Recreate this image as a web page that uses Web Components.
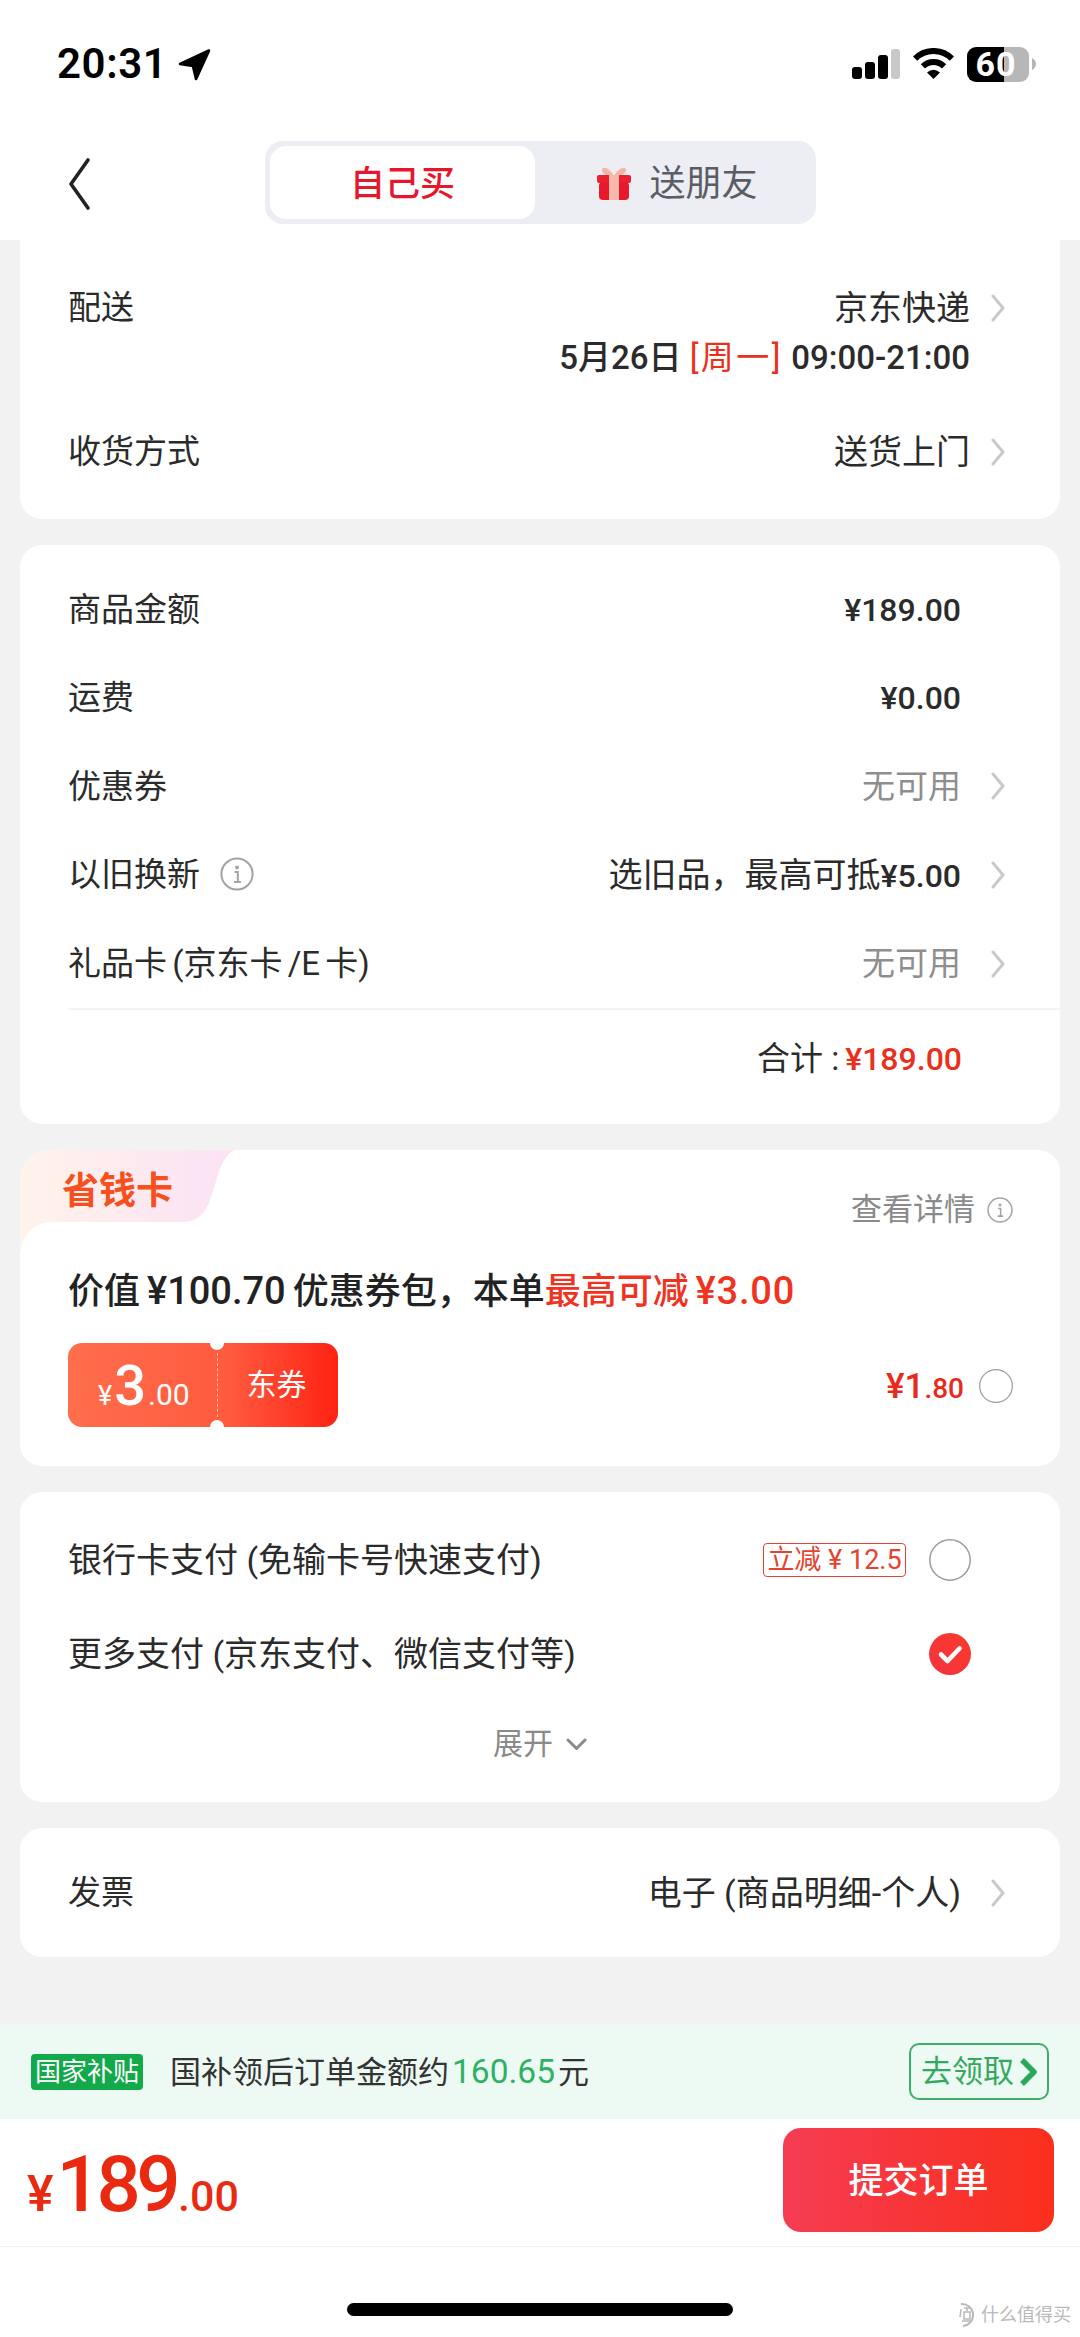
<!DOCTYPE html>
<html lang="zh-CN">
<head>
<meta charset="utf-8">
<title>确认订单</title>
<style>
    html, body { margin: 0; padding: 0; }
    body {
        width: 1080px;
        height: 2337px;
        overflow: hidden;
        display: flex;
        flex-direction: column;
        background: #f2f2f2;
        color: #2b2b2b;
        font: 400 33px/1.2 Roboto, "Noto Sans CJK SC", sans-serif;
    }
    .money { font-size: 32px; font-weight: 500; }
    .red { color: #e9301c; }
    .muted { color: #8e8e8e; }
    .date { font-size: 33px; font-weight: 500; }
    .date .red { font-weight: 400; letter-spacing: 2.5px; }
    .wide { font-size: 34px; }
    .tight { word-spacing: -3px; }
    .cards { display: flex; flex-direction: column; gap: 26px; padding: 0 20px; }
</style>
</head>
<body>
    <status-bar></status-bar>
    <nav-tabs></nav-tabs>

    <div class="cards">
        <order-card flat style="height:279px;padding-top:43px">
            <info-row style="--row-height:50px;--value-gap:21px">
                <span slot="label">配送</span>
                <span class="wide">京东快递</span>
            </info-row>
            <info-row plain style="--row-height:50px;--value-gap:21px">
                <span class="date">5月26日 <span class="red">[周一]</span> 09:00-21:00</span>
            </info-row>
            <info-row style="--row-height:50px;--value-gap:21px;margin-top:44px">
                <span slot="label">收货方式</span>
                <span class="wide">送货上门</span>
            </info-row>
        </order-card>

        <order-card style="height:579px;padding-top:20px">
            <info-row plain>
                <span slot="label">商品金额</span>
                <span class="money">¥189.00</span>
            </info-row>
            <info-row plain>
                <span slot="label">运费</span>
                <span class="money">¥0.00</span>
            </info-row>
            <info-row>
                <span slot="label">优惠券</span>
                <span class="muted">无可用</span>
            </info-row>
            <info-row>
                <span slot="label">以旧换新<info-icon></info-icon></span>
                <span class="wide">选旧品，最高可抵</span><span class="money">¥5.00</span>
            </info-row>
            <info-row>
                <span slot="label" class="tight">礼品卡 (京东卡 /E 卡)</span>
                <span class="muted">无可用</span>
            </info-row>
            <order-total>合计 : <span slot="amount">¥189.00</span></order-total>
        </order-card>

        <saving-card></saving-card>

        <order-card style="height:310px;padding-top:21px">
            <pay-option>
                银行卡支付 (免输卡号快速支付)
                <promo-tag slot="tag">立减 ¥ 12.5</promo-tag>
            </pay-option>
            <pay-option checked>更多支付 (京东支付、微信支付等)</pay-option>
            <expand-row>展开</expand-row>
        </order-card>

        <order-card style="height:129px;padding-top:2px">
            <info-row style="--row-height:126px">
                <span slot="label">发票</span>
                <span class="wide">电子 (商品明细-个人)</span>
            </info-row>
        </order-card>
    </div>

    <page-footer>
        <subsidy-bar></subsidy-bar>
        <checkout-bar></checkout-bar>
    </page-footer>

<script>
class ChevronIcon extends HTMLElement {
    connectedCallback() {
        this.attachShadow({mode: "open"}).innerHTML = `
            <style>
                :host { display: block; width: 14px; height: 28px; }
                svg { display: block; }
            </style>
            <svg width="14" height="28" viewBox="0 0 14 28" fill="none">
                <path d="M2 2 L12 14 L2 26" stroke="#c9c9c9" stroke-width="3" stroke-linecap="round" stroke-linejoin="round"/>
            </svg>`;
    }
}

class InfoIcon extends HTMLElement {
    connectedCallback() {
        this.attachShadow({mode: "open"}).innerHTML = `
            <style>
                :host {
                    display: inline-block;
                    width: var(--icon-size, 34px);
                    height: var(--icon-size, 34px);
                    margin-left: var(--icon-gap, 20px);
                    vertical-align: -5px;
                }
                svg { display: block; width: 100%; height: 100%; }
            </style>
            <svg viewBox="0 0 34 34" fill="none">
                <circle cx="17" cy="17" r="15.6" stroke="#a3a3a3" stroke-width="2"/>
                <circle cx="17" cy="10.5" r="1.9" fill="#a3a3a3"/>
                <path d="M14.5 15 H17.8 V24.5 M14 25 H21" stroke="#a3a3a3" stroke-width="2"/>
            </svg>`;
    }
}

class RadioMark extends HTMLElement {
    connectedCallback() {
        const checked = this.hasAttribute("checked");
        this.attachShadow({mode: "open"}).innerHTML = `
            <style>
                :host {
                    display: block;
                    width: var(--radio-size, 42px);
                    height: var(--radio-size, 42px);
                }
                svg { display: block; width: 100%; height: 100%; }
            </style>
            <svg viewBox="0 0 42 42" fill="none">
                ${checked ? `
                <defs><linearGradient id="g" x1="0" y1="1" x2="1" y2="0">
                    <stop offset="0" stop-color="#f4333f"/><stop offset="1" stop-color="#fb3a2c"/>
                </linearGradient></defs>
                <circle cx="21" cy="21" r="21" fill="url(#g)"/>
                <path d="M12 21.5 L18.5 28 L30.5 15.5" stroke="#fff" stroke-width="4.6" stroke-linecap="round" stroke-linejoin="round"/>
                ` : `<circle cx="21" cy="21" r="20.2" stroke="#9c9c9c" stroke-width="1.5"/>`}
            </svg>`;
    }
}

class StatusBar extends HTMLElement {
    connectedCallback() {
        this.attachShadow({mode: "open"}).innerHTML = `
            <style>
                :host {
                    display: flex;
                    align-items: center;
                    justify-content: space-between;
                    height: 110px;
                    padding: 18px 44px 0 57px;
                    box-sizing: border-box;
                    background: #fff;
                    color: #000;
                }
                .left { display: flex; align-items: center; gap: 11px; }
                .time { font: 600 42px/1 Roboto, sans-serif; letter-spacing: 0.6px; }
                .right { display: flex; align-items: center; }
                svg { display: block; }
                .signal { margin-right: 13px; }
                .wifi { margin-right: 13px; }
                .battery {
                    width: 62px;
                    height: 35px;
                    border-radius: 9px;
                    background: linear-gradient(90deg, #000 60%, #b7b7b7 60%);
                    color: #fff;
                    font: 700 34px/35px Roboto, sans-serif;
                    letter-spacing: 1px;
                    text-align: center;
                    padding-right: 4px;
                    box-sizing: border-box;
                    white-space: nowrap;
                }
                .nub { margin-left: 3px; }
            </style>
            <div class="left">
                <span class="time">20:31</span>
                <svg width="33" height="33" viewBox="0 0 32 32">
                    <path d="M30 2.5 L2 15.5 L14.5 17.5 L17.5 30 Z" fill="#000" stroke="#000" stroke-width="2.6" stroke-linejoin="round"/>
                </svg>
            </div>
            <div class="right">
                <svg class="signal" width="48" height="30" viewBox="0 0 48 30">
                    <rect x="0" y="18" width="10" height="12" rx="3" fill="#000"/>
                    <rect x="13" y="13" width="10" height="17" rx="3" fill="#000"/>
                    <rect x="26" y="6" width="10" height="24" rx="3" fill="#000"/>
                    <rect x="39" y="0" width="9" height="30" rx="3" fill="#c9c9c9"/>
                </svg>
                <svg class="wifi" width="41" height="32" viewBox="0 0 41 32" fill="none">
                    <path d="M2.1 10.6 A26 26 0 0 1 38.9 10.6" stroke="#000" stroke-width="6"/>
                    <path d="M9.9 18.4 A15 15 0 0 1 31.1 18.4" stroke="#000" stroke-width="6"/>
                    <path d="M20.5 31 L14 24.4 Q20.5 19 27 24.4 Z" fill="#000"/>
                </svg>
                <div class="battery">60</div>
                <svg class="nub" width="4" height="12" viewBox="0 0 4 12"><path d="M0 0 Q4 2 4 6 Q4 10 0 12 Z" fill="#b7b7b7"/></svg>
            </div>`;
    }
}

class NavTabs extends HTMLElement {
    connectedCallback() {
        this.attachShadow({mode: "open"}).innerHTML = `
            <style>
                :host {
                    display: block;
                    position: relative;
                    height: 130px;
                    box-sizing: border-box;
                    padding: 31px 0 0 265px;
                    background: #fff;
                }
                .back { position: absolute; left: 67px; top: 47px; display: block; }
                .tabs {
                    display: flex;
                    width: 551px;
                    height: 83px;
                    box-sizing: border-box;
                    padding: 5px;
                    background: #eceef3;
                    border-radius: 18px;
                }
                .tab {
                    display: flex;
                    align-items: center;
                    justify-content: center;
                    font-size: 36px;
                }
                .tab span.t { padding-top: 4px; }
                .active {
                    width: 265px;
                    background: #fff;
                    border-radius: 16px;
                    color: #e6162d;
                    font-weight: 500;
                    font-size: 35px;
                }
                .other { flex: 1; gap: 17px; color: #5a5d66; padding-left: 8px; }
                svg { display: block; }
            </style>
            <svg class="back" width="24" height="54" viewBox="0 0 24 54" fill="none">
                <path d="M21 3 L4 27 L21 51" stroke="#222" stroke-width="3.6" stroke-linecap="round" stroke-linejoin="round"/>
            </svg>
            <div class="tabs">
                <div class="tab active"><span class="t">自己买</span></div>
                <div class="tab other">
                    <svg width="36" height="36" viewBox="0 0 36 36">
                        <path d="M18 11 C13 2 6 1 6 5 C6 9 12 11 18 11 C24 11 30 9 30 5 C30 1 23 2 18 11Z" fill="#f3b6a4"/>
                        <rect x="1" y="10" width="34" height="8" rx="2" fill="#ee2030"/>
                        <rect x="3" y="17" width="30" height="18" rx="4" fill="#e8192c"/>
                        <rect x="13" y="10" width="10" height="25" fill="#f6b9ac"/>
                    </svg>
                    <span class="t">送朋友</span>
                </div>
            </div>`;
    }
}

class OrderCard extends HTMLElement {
    connectedCallback() {
        this.attachShadow({mode: "open"}).innerHTML = `
            <style>
                :host {
                    display: block;
                    box-sizing: border-box;
                    background: #fff;
                    border-radius: 22px;
                }
                :host([flat]) { border-radius: 0 0 22px 22px; }
            </style>
            <slot></slot>`;
    }
}

class InfoRow extends HTMLElement {
    connectedCallback() {
        this.attachShadow({mode: "open"}).innerHTML = `
            <style>
                :host {
                    display: flex;
                    align-items: center;
                    height: var(--row-height, 88.6px);
                    padding: 0 55px 0 48px;
                }
                .value {
                    flex: 1;
                    text-align: right;
                    white-space: nowrap;
                    margin-right: var(--value-gap, 30px);
                }
                chevron-icon { flex: none; }
                :host([plain]) chevron-icon { visibility: hidden; }
            </style>
            <slot name="label"></slot>
            <div class="value"><slot></slot></div>
            <chevron-icon></chevron-icon>`;
    }
}

class OrderTotal extends HTMLElement {
    connectedCallback() {
        this.attachShadow({mode: "open"}).innerHTML = `
            <style>
                :host {
                    display: flex;
                    align-items: center;
                    justify-content: flex-end;
                    gap: 6px;
                    height: 100px;
                    margin-left: 48px;
                    padding-right: 98px;
                    border-top: 2px solid #f3f3f3;
                    box-sizing: border-box;
                }
                ::slotted([slot="amount"]) { color: #e9301c; font-size: 32px; font-weight: 500; }
            </style>
            <slot></slot><slot name="amount"></slot>`;
    }
}

class CouponTicket extends HTMLElement {
    connectedCallback() {
        this.attachShadow({mode: "open"}).innerHTML = `
            <style>
                :host {
                    display: flex;
                    position: relative;
                    width: 270px;
                    height: 84px;
                    border-radius: 14px;
                    background: linear-gradient(90deg, #ff6e4c 0%, #ff5a3e 60%, #ff2213 100%);
                    color: #fff;
                }
                .amount {
                    width: 149px;
                    box-sizing: border-box;
                    padding: 0 0 0 30px;
                    display: flex;
                    align-items: baseline;
                    line-height: 86px;
                    font-family: Roboto, sans-serif;
                }
                .yen { font-size: 27px; margin-right: 2px; }
                .big { font-size: 56px; font-weight: 500; }
                .small { font-size: 30px; margin-left: 2px; }
                .label {
                    flex: 1;
                    display: flex;
                    align-items: center;
                    justify-content: center;
                    font-size: 30px;
                    border-left: 1px dashed rgba(255,255,255,0.6);
                    margin: 10px 0;
                    padding-right: 3px;
                }
                .notch {
                    position: absolute;
                    left: 142px;
                    width: 14px;
                    height: 14px;
                    background: #fff;
                    border-radius: 50%;
                }
                .top { top: -7px; }
                .bottom { bottom: -7px; }
            </style>
            <div class="amount"><span class="yen">¥</span><span class="big">3</span><span class="small">.00</span></div>
            <div class="label">东券</div>
            <i class="notch top"></i><i class="notch bottom"></i>`;
    }
}

class SavingCard extends HTMLElement {
    connectedCallback() {
        this.attachShadow({mode: "open"}).innerHTML = `
            <style>
                :host {
                    display: block;
                    position: relative;
                    height: 316px;
                    box-sizing: border-box;
                    background: #fff;
                    border-radius: 30px 22px 22px 22px;
                    overflow: hidden;
                }
                .tag-bg { position: absolute; left: 0; top: 0; display: block; }
                .head {
                    position: relative;
                    display: flex;
                    justify-content: space-between;
                    height: 84px;
                    padding: 0 47px 0 42px;
                }
                .name {
                    font-size: 37px;
                    font-weight: 700;
                    line-height: 84px;
                    color: #f5501e;
                }
                .detail {
                    display: flex;
                    align-items: center;
                    height: 36px;
                    margin-top: 42px;
                    font-size: 31px;
                    color: #8a8a8a;
                    --icon-size: 26px;
                    --icon-gap: 12px;
                }
                .title {
                    height: 50px;
                    margin-top: 32px;
                    padding-left: 48px;
                    font-size: 36px;
                    line-height: 50px;
                    font-weight: 500;
                    color: #222;
                    white-space: nowrap;
                    word-spacing: -2px;
                }
                .title b { font-weight: 500; color: #f0331f; }
                .num { font-family: Roboto, sans-serif; font-size: 38px; }
                .num.end { letter-spacing: 0.8px; }
                .offer {
                    display: flex;
                    align-items: center;
                    justify-content: space-between;
                    margin-top: 27px;
                    padding: 0 47px 0 48px;
                }
                .price {
                    display: flex;
                    align-items: center;
                    gap: 15px;
                    color: #e9291c;
                    --radio-size: 34px;
                    padding-top: 2px;
                }
                .price span {
                    font: 500 35px/1 Roboto, sans-serif;
                }
                .price small { font-size: 28px; font-weight: 500; }
            </style>
            <svg class="tag-bg" width="230" height="110" viewBox="0 0 230 110">
                <defs><linearGradient id="tagfill" x1="0" y1="0" x2="1" y2="0">
                    <stop offset="0" stop-color="#fff3ea"/><stop offset="1" stop-color="#fbe2f5"/>
                </linearGradient></defs>
                <path d="M0 104 V30 Q0 0 30 0 H214 Q203 6 197 28 L190 50 Q183 72 162 72 H34 Q4 72 0 104Z" fill="url(#tagfill)"/>
            </svg>
            <div class="head">
                <span class="name">省钱卡</span>
                <span class="detail">查看详情<info-icon></info-icon></span>
            </div>
            <div class="title">价值 <span class="num">¥100.70</span> 优惠券包，本单<b>最高可减 <span class="num end">¥3.00</span></b></div>
            <div class="offer">
                <coupon-ticket></coupon-ticket>
                <div class="price"><span>¥1<small>.80</small></span><radio-mark></radio-mark></div>
            </div>`;
    }
}

class PromoTag extends HTMLElement {
    connectedCallback() {
        this.attachShadow({mode: "open"}).innerHTML = `
            <style>
                :host {
                    display: flex;
                    align-items: center;
                    justify-content: center;
                    width: 143px;
                    height: 34px;
                    box-sizing: border-box;
                    border: 1.5px solid #e5432f;
                    border-radius: 4px;
                    color: #e5432f;
                    font-size: 27px;
                    white-space: nowrap;
                }
            </style>
            <slot></slot>`;
    }
}

class PayOption extends HTMLElement {
    connectedCallback() {
        const checked = this.hasAttribute("checked") ? "checked" : "";
        this.attachShadow({mode: "open"}).innerHTML = `
            <style>
                :host {
                    display: flex;
                    align-items: center;
                    height: 94px;
                    padding: 0 89px 0 48px;
                    font-size: 34px;
                }
                .text { flex: 1; white-space: nowrap; }
                ::slotted([slot="tag"]) { margin-right: 23px; }
            </style>
            <div class="text"><slot></slot></div>
            <slot name="tag"></slot>
            <radio-mark ${checked}></radio-mark>`;
    }
}

class ExpandRow extends HTMLElement {
    connectedCallback() {
        this.attachShadow({mode: "open"}).innerHTML = `
            <style>
                :host {
                    display: flex;
                    align-items: center;
                    justify-content: center;
                    gap: 13px;
                    height: 85px;
                    font-size: 30px;
                    color: #8a8a8a;
                }
                svg { display: block; margin-top: 2px; }
            </style>
            <slot></slot>
            <svg width="21" height="13" viewBox="0 0 21 13" fill="none">
                <path d="M2 2 L10.5 10.5 L19 2" stroke="#8a8a8a" stroke-width="3" stroke-linecap="round" stroke-linejoin="round"/>
            </svg>`;
    }
}

class SubsidyBar extends HTMLElement {
    connectedCallback() {
        this.attachShadow({mode: "open"}).innerHTML = `
            <style>
                :host {
                    display: flex;
                    align-items: center;
                    height: 95px;
                    padding: 0 31px 0 31px;
                    background: #edf9f3;
                    font-size: 31px;
                    color: #333;
                }
                .badge {
                    width: 112px;
                    height: 36px;
                    border-radius: 4px;
                    background: #12a94a;
                    color: #fff;
                    font-size: 26px;
                    line-height: 36px;
                    text-align: center;
                    white-space: nowrap;
                    margin-right: 27px;
                }
                .text { flex: 1; white-space: nowrap; }
                .text b { font: 400 33.5px Roboto, sans-serif; color: #2fb163; margin: 0 3px; }
                .claim {
                    display: flex;
                    align-items: center;
                    gap: 4px;
                    width: 140px;
                    height: 57px;
                    box-sizing: border-box;
                    padding-left: 10px;
                    border: 2px solid #3fae68;
                    border-radius: 10px;
                    color: #35a860;
                    font-size: 31px;
                    white-space: nowrap;
                }
                svg { display: block; flex: none; }
            </style>
            <span class="badge">国家补贴</span>
            <span class="text">国补领后订单金额约<b>160.65</b>元</span>
            <span class="claim">去领取<svg width="20" height="30" viewBox="0 0 20 30" fill="none"><path d="M4 3 L16 15 L4 27" stroke="#2aa75a" stroke-width="5.5" stroke-linejoin="round"/></svg></span>`;
    }
}

class CheckoutBar extends HTMLElement {
    connectedCallback() {
        this.attachShadow({mode: "open"}).innerHTML = `
            <style>
                :host {
                    display: flex;
                    align-items: center;
                    justify-content: space-between;
                    height: 128px;
                    box-sizing: border-box;
                    padding: 0 26px 6px 27px;
                    background: #fff;
                    border-bottom: 1px solid #f1f1f1;
                }
                .price {
                    display: flex;
                    align-items: baseline;
                    color: #ea2a10;
                    font-family: Roboto, sans-serif;
                    margin-top: 10px;
                }
                .yen { font-size: 50px; font-weight: 500; margin-right: 3px; }
                .big { font-size: 78px; font-weight: 500; letter-spacing: -4.5px; margin-right: 2px; }
                .small { font-size: 43px; font-weight: 500; }
                .submit {
                    display: flex;
                    align-items: center;
                    justify-content: center;
                    width: 271px;
                    height: 104px;
                    box-sizing: border-box;
                    padding-top: 5px;
                    border-radius: 18px;
                    background: linear-gradient(90deg, #f53c52 0%, #fa2f1c 100%);
                    color: #fff;
                    font-size: 35px;
                    font-weight: 500;
                }
            </style>
            <div class="price"><span class="yen">¥</span><span class="big">189</span><span class="small">.00</span></div>
            <div class="submit">提交订单</div>`;
    }
}

class PageFooter extends HTMLElement {
    connectedCallback() {
        this.attachShadow({mode: "open"}).innerHTML = `
            <style>
                :host {
                    display: block;
                    position: relative;
                    margin-top: auto;
                    background: #fff;
                }
                .home {
                    height: 90px;
                    display: flex;
                    justify-content: center;
                    padding-top: 56px;
                    box-sizing: border-box;
                }
                .home i {
                    display: block;
                    width: 386px;
                    height: 13px;
                    border-radius: 7px;
                    background: #000;
                }
                .mark {
                    position: absolute;
                    right: 9px;
                    bottom: 9px;
                    display: flex;
                    align-items: center;
                    gap: 4px;
                    color: #b9b9b9;
                    font-size: 18px;
                    white-space: nowrap;
                }
                svg { display: block; }
            </style>
            <slot></slot>
            <div class="home"><i></i></div>
            <div class="mark">
                <svg width="24" height="26" viewBox="0 0 24 26" fill="none">
                    <path d="M8 2 A11 11 0 1 1 10 24" stroke="#b9b9b9" stroke-width="2"/>
                    <path d="M8 7 L7 15 M11 6 H17 M14 6 V9 M11 10 H17 V17 H11 Z M9 19 H19" stroke="#b9b9b9" stroke-width="1.5"/>
                </svg>
                <span>什么值得买</span>
            </div>`;
    }
}

customElements.define("chevron-icon", ChevronIcon);
customElements.define("info-icon", InfoIcon);
customElements.define("radio-mark", RadioMark);
customElements.define("status-bar", StatusBar);
customElements.define("nav-tabs", NavTabs);
customElements.define("order-card", OrderCard);
customElements.define("info-row", InfoRow);
customElements.define("order-total", OrderTotal);
customElements.define("coupon-ticket", CouponTicket);
customElements.define("saving-card", SavingCard);
customElements.define("promo-tag", PromoTag);
customElements.define("pay-option", PayOption);
customElements.define("expand-row", ExpandRow);
customElements.define("subsidy-bar", SubsidyBar);
customElements.define("checkout-bar", CheckoutBar);
customElements.define("page-footer", PageFooter);
</script>
</body>
</html>
